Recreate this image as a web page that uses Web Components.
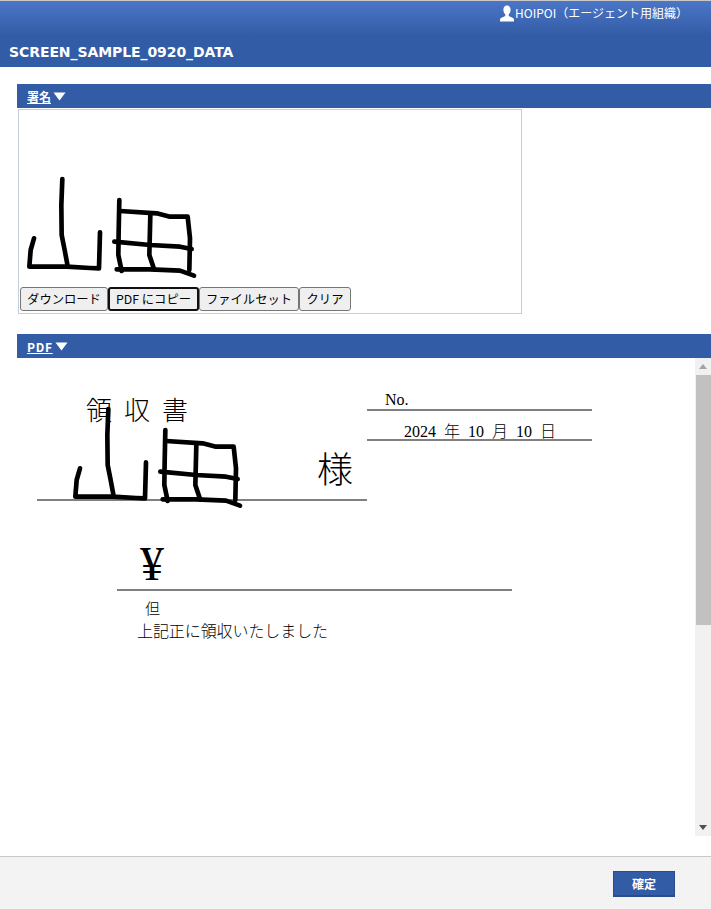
<!DOCTYPE html>
<html lang="ja">
<head>
<meta charset="utf-8">
<title>SCREEN_SAMPLE_0920_DATA</title>
<style>
  html, body { margin: 0; height: 100%; overflow: hidden; background: #fff; }
  body { font-family: "Noto Sans CJK JP", sans-serif; }
</style>
</head>
<body>
<app-shell>
  <app-header slot="header" title-text="SCREEN_SAMPLE_0920_DATA" user="HOIPOI（エージェント用組織）"></app-header>
  <section-bar>署名</section-bar>
  <signature-box></signature-box>
  <section-bar style="margin-top:20px;letter-spacing:.7px">PDF</section-bar>
  <pdf-viewer></pdf-viewer>
  <app-footer slot="footer"></app-footer>
</app-shell>

<script>
// the two kanji strokes are shared by the pad and the stamped pdf
const SIGNATURE_STROKES = [
  "M72 400 L62 435 L58 485 L170 485 L240 489 L267 490 L270 382",
  "M157 222 L154 300 L155 390 L163 430 L172 478",
  "M328 285 L326 380 L325 450 L335 498",
  "M320 493 L420 493 L510 497 L552 512",
  "M330 318 L440 325 L480 335 L533 335 L540 400 L538 495",
  "M313 410 L420 420 L510 425 L545 432",
  "M421 330 L418 450 L432 492",
];

class AppShell extends HTMLElement {
  constructor() {
    super();
    this.attachShadow({ mode: "open" }).innerHTML = `
      <style>
        :host { display: flex; flex-direction: column; height: 909px; }
        main { flex: 1; padding: 17px 0 20px 17px; min-height: 0; }
      </style>
      <slot name="header"></slot>
      <main><slot></slot></main>
      <slot name="footer"></slot>
    `;
  }
}

class AppHeader extends HTMLElement {
  constructor() {
    super();
    this.attachShadow({ mode: "open" }).innerHTML = `
      <style>
        :host {
          display: flex;
          flex-direction: column;
          height: 67px;
          box-sizing: border-box;
          border-top: 1px solid #c9c9c9;
          background: linear-gradient(#4a76c6 0, #3f69b6 18px, #335ca6 34px, #335ca6 100%);
          color: #fff;
        }
        .user {
          display: flex;
          justify-content: flex-end;
          align-items: center;
          gap: 0;
          height: 24px;
          padding-right: 23px;
          font-size: 12px;
          line-height: 24px;
        }
        .user svg { width: 16px; height: 17px; display: block; }
        h1 {
          margin: 17px 0 0 9px;
          font: bold 14px/20px "DejaVu Sans", "Noto Sans CJK JP", sans-serif;
          letter-spacing: -0.08px;
        }
      </style>
      <div class="user">
        <svg viewBox="0 0 16 17"><path fill="#fff" d="M8 0.5c2.3 0 3.6 1.8 3.6 4.2 0 1.9-.8 3.6-1.9 4.6v1.3c0 .6 1 1 2.2 1.5 1.5.6 3.1 1.2 3.1 2.6v1.8H1v-1.8c0-1.4 1.6-2 3.1-2.6 1.2-.5 2.2-.9 2.2-1.5V9.3C5.2 8.3 4.4 6.6 4.4 4.7 4.4 2.3 5.7.5 8 .5z"/></svg>
        <span class="name"></span>
      </div>
      <h1></h1>
    `;
  }

  connectedCallback() {
    this.shadowRoot.querySelector(".name").textContent = this.getAttribute("user");
    this.shadowRoot.querySelector("h1").textContent = this.getAttribute("title-text");
  }
}

class SectionBar extends HTMLElement {
  constructor() {
    super();
    this.attachShadow({ mode: "open" }).innerHTML = `
      <style>
        :host {
          display: flex;
          align-items: center;
          gap: 2px;
          height: 24px;
          padding-left: 10px;
          background: #335ca6;
          color: #fff;
          font-size: 12px;
          font-weight: bold;
        }
        a { color: inherit; text-decoration: underline; }
        svg { width: 13px; height: 9px; display: block; }
      </style>
      <a><slot></slot></a>
      <svg viewBox="0 0 13 9"><path fill="#fff" d="M0.5 0.5h12L6.5 8.5z"/></svg>
    `;
  }
}

class SignatureStrokes extends HTMLElement {
  constructor() {
    super();
    const paths = SIGNATURE_STROKES.map((d) => `<path d="${d}"/>`).join("");
    this.attachShadow({ mode: "open" }).innerHTML = `
      <style>
        :host { display: block; width: 500px; height: 177px; }
        svg { display: block; width: 100%; height: 100%; }
        path { fill: none; stroke: #000; stroke-width: 14; stroke-linecap: round; stroke-linejoin: round; }
      </style>
      <svg viewBox="27 15 1500 531">${paths}</svg>
    `;
  }
}

class SignatureBox extends HTMLElement {
  constructor() {
    super();
    this.attachShadow({ mode: "open" }).innerHTML = `
      <style>
        :host {
          display: block;
          box-sizing: border-box;
          width: 504px;
          height: 205px;
          margin: 1px 0 0 1px;
          border: 1px solid #c3cfdf;
        }
        .buttons { display: flex; padding-left: 1px; }
        button {
          box-sizing: border-box;
          height: 24px;
          margin: 0;
          padding: 0;
          border: 1px solid #767676;
          border-radius: 3px;
          background: #efefef;
          color: #000;
          font: 12.3px/20px "Noto Sans CJK JP", sans-serif;
        }
        button.focused { border: 2px solid #101010; }
      </style>
      <signature-strokes></signature-strokes>
      <div class="buttons">
        <button style="width:88px">ダウンロード</button>
        <button class="focused" style="width:91px">PDF にコピー</button>
        <button style="width:100px">ファイルセット</button>
        <button style="width:52px">クリア</button>
      </div>
    `;
  }
}

class PdfViewer extends HTMLElement {
  constructor() {
    super();
    this.attachShadow({ mode: "open" }).innerHTML = `
      <style>
        :host { display: flex; height: 478px; overflow: hidden; }
        .page { flex: 1; position: relative; overflow: hidden; color: #000; }
        .page > * { position: absolute; }
        .line { height: 2px; background: #808080; }
        .t { white-space: pre; font-family: "Liberation Serif", "Noto Sans CJK JP", serif; line-height: 1; font-weight: 300; }
        signature-strokes { left: 48.4px; top: -18.2px; }
        .bar { width: 16px; display: flex; flex-direction: column; align-items: stretch; background: #f1f1f1; }
        .arrow { height: 17px; display: flex; align-items: center; justify-content: center; }
        .arrow svg { width: 8px; height: 5px; display: block; }
        .thumb { height: 250px; margin: 0 0 0 1px; background: #c1c1c1; }
        .rest { flex: 1; }
      </style>
      <div class="page">
        <div class="t" style="left:69px;top:41px;font-size:26px;letter-spacing:12px">領収書</div>
        <div class="t" style="left:368px;top:34px;font-size:16px">No.</div>
        <div class="line" style="left:350px;top:51px;width:225px"></div>
        <div class="t" style="left:387px;top:66px;font-size:16px">2024  年  10  月  10  日</div>
        <div class="line" style="left:350px;top:81px;width:225px"></div>
        <div class="t" style="left:300px;top:95px;font-size:36px">様</div>
        <div class="line" style="left:20px;top:141px;width:330px"></div>
        <div class="t" style="left:123px;top:182px;font-size:48px">¥</div>
        <div class="line" style="left:100px;top:231px;width:395px"></div>
        <div class="t" style="left:128px;top:244px;font-size:15px">但</div>
        <div class="t" style="left:120px;top:266px;font-size:16px;letter-spacing:-.08px">上記正に領収いたしました</div>
        <signature-strokes></signature-strokes>
      </div>
      <div class="bar">
        <div class="arrow"><svg viewBox="0 0 8 5"><path fill="#a3a3a3" d="M4 0l4 5H0z"/></svg></div>
        <div class="thumb"></div>
        <div class="rest"></div>
        <div class="arrow"><svg viewBox="0 0 8 5"><path fill="#505050" d="M0 0h8L4 5z"/></svg></div>
      </div>
    `;
  }
}

class AppFooter extends HTMLElement {
  constructor() {
    super();
    this.attachShadow({ mode: "open" }).innerHTML = `
      <style>
        :host {
          display: flex;
          justify-content: flex-end;
          align-items: flex-start;
          box-sizing: border-box;
          height: 53px;
          padding: 14px 36px 0 0;
          background: #f3f3f3;
          border-top: 1px solid #c8c8c8;
        }
        button {
          box-sizing: border-box;
          width: 62px;
          height: 26px;
          padding: 0;
          background: #335ca6;
          border: 1px solid #2a4c8c;
          border-bottom-width: 2px;
          color: #fff;
          font: bold 12px/20px "Noto Sans CJK JP", sans-serif;
        }
      </style>
      <button>確定</button>
    `;
  }
}

customElements.define("signature-strokes", SignatureStrokes);
customElements.define("app-shell", AppShell);
customElements.define("app-header", AppHeader);
customElements.define("section-bar", SectionBar);
customElements.define("signature-box", SignatureBox);
customElements.define("pdf-viewer", PdfViewer);
customElements.define("app-footer", AppFooter);
</script>
</body>
</html>
